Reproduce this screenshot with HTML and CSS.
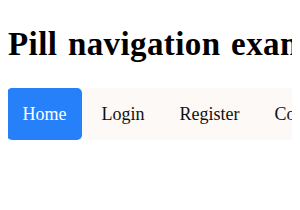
FILE: index.html
```html
<!DOCTYPE html>
<html lang="en">
<head>
  <meta charset="UTF-8" />
  <title>Pill navigation example</title>
  <link rel="stylesheet" href="styles.css">
</head>
<body>
  <h1>Pill navigation example</h1>

  <ul class="pills">
    <li><a class="active" href="#">Home</a></li>
    <li><a href="#">Login</a></li>
    <li><a href="#">Register</a></li>
    <li><a href="#">Contact</a></li>
  </ul>
</body>
</html>
```

FILE: styles.css
```css
body {
  margin: 8px;
  font-family: 'Liberation Serif', 'Times New Roman', serif;
  background: #fff;
  color: #000;
}
h1 {
  font-size: 33px;
  letter-spacing: 0.4px;
  word-spacing: 2px;
  white-space: nowrap;
  margin: 18px 0 25px;
}
.pills {
  list-style: none;
  width: max-content;
  margin: 0 0 0 -1px;
  padding: 0;
  display: flex;
  gap: 4px;
  background: #fdf9f7;
}
.pills a {
  display: block;
  padding: 15.5px;
  font-size: 18px;
  color: #111;
  text-decoration: none;
  border-radius: 5px;
}
.pills a.active {
  background: #2680fa;
  color: #fff;
}
```
